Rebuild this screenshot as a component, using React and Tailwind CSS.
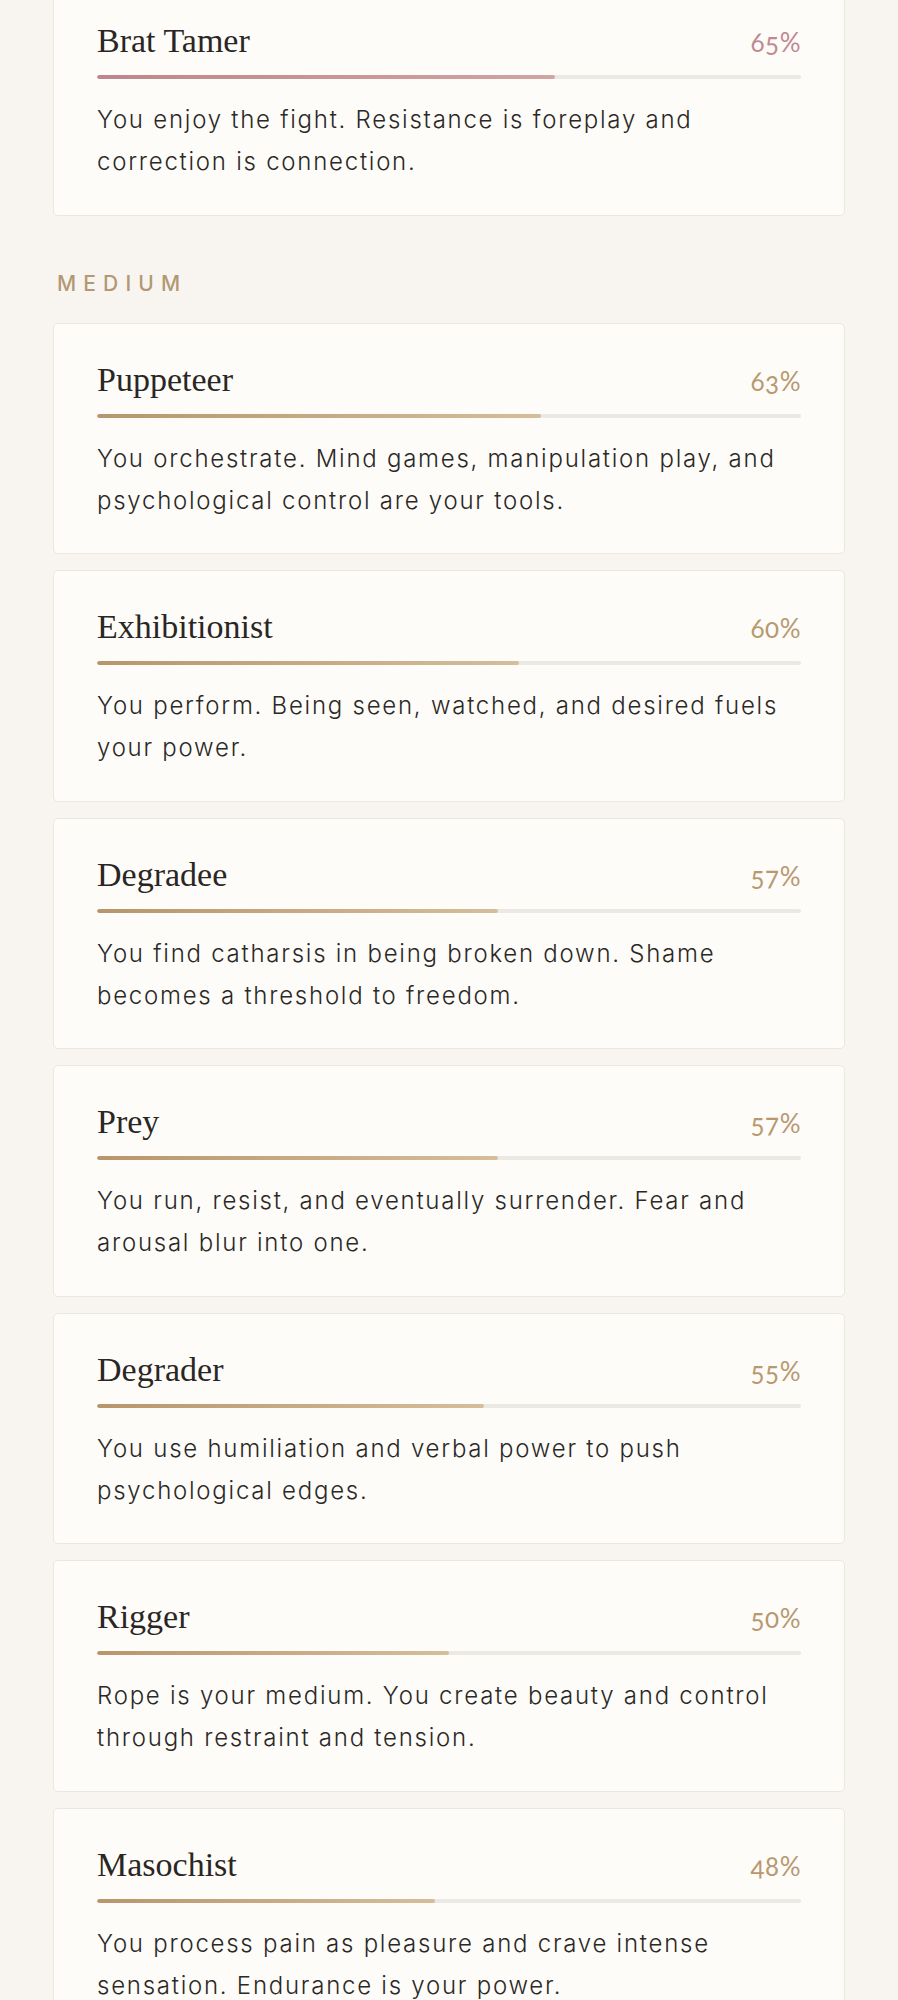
import React from "react";

const topMatch = {
  name: "Brat Tamer",
  pct: 65,
  tone: "rose",
  desc: "You enjoy the fight. Resistance is foreplay and correction is connection.",
};

const medium = [
  {
    name: "Puppeteer",
    pct: 63,
    desc: "You orchestrate. Mind games, manipulation play, and psychological control are your tools.",
  },
  {
    name: "Exhibitionist",
    pct: 60,
    desc: "You perform. Being seen, watched, and desired fuels your power.",
  },
  {
    name: "Degradee",
    pct: 57,
    desc: "You find catharsis in being broken down. Shame becomes a threshold to freedom.",
  },
  {
    name: "Prey",
    pct: 57,
    desc: "You run, resist, and eventually surrender. Fear and arousal blur into one.",
  },
  {
    name: "Degrader",
    pct: 55,
    desc: "You use humiliation and verbal power to push psychological edges.",
  },
  {
    name: "Rigger",
    pct: 50,
    desc: "Rope is your medium. You create beauty and control through restraint and tension.",
  },
  {
    name: "Masochist",
    pct: 48,
    desc: "You process pain as pleasure and crave intense sensation. Endurance is your power.",
  },
];

const ArchetypeCard = ({ item, className = "" }) => {
  const rose = item.tone === "rose";
  return (
    <div
      className={`bg-[#fdfcf9] border border-[#ebe7e0] rounded-[5px] px-[43px] pt-[36px] pb-[31.5px] ${className}`}
    >
      <div className="flex items-baseline justify-between">
        <h3 className="font-['Liberation_Serif',serif] text-[34px] leading-[40px] text-[#2a2623]">
          {item.name}
        </h3>
        <span
          className={`font-['Lato',sans-serif] oldstyle-nums text-[26px] tracking-[0.5px] ${
            rose ? "text-[#c0898f]" : "text-[#b8986f]"
          }`}
        >
          {item.pct}%
        </span>
      </div>
      <div className="mt-[13px] h-[4px] w-full rounded-full bg-[#ece9e4] overflow-hidden">
        <div
          className={`h-full rounded-full bg-gradient-to-r ${
            rose
              ? "from-[#be868c] to-[#d2a4a4]"
              : "from-[#b8966b] to-[#d6bd9b]"
          }`}
          style={{ width: `${item.pct}%` }}
        />
      </div>
      <p className="mt-[20px] font-['Inter',sans-serif] font-light text-[24px] leading-[42px] tracking-[1.75px] text-[#2b2825]">
        {item.desc}
      </p>
    </div>
  );
};

export default function App() {
  return (
    <div className="min-h-[2000px] bg-[#f8f5f1] px-[53px] overflow-hidden">
      <ArchetypeCard item={topMatch} className="-mt-[16px]" />

      <h2 className="mt-[56px] mb-[27px] pl-[4px] font-['Inter',sans-serif] font-medium text-[21px] leading-[24px] tracking-[0.34em] text-[#b39874]">
        MEDIUM
      </h2>

      <div className="flex flex-col gap-[16px]">
        {medium.map((item) => (
          <ArchetypeCard key={item.name} item={item} />
        ))}
      </div>
    </div>
  );
}
